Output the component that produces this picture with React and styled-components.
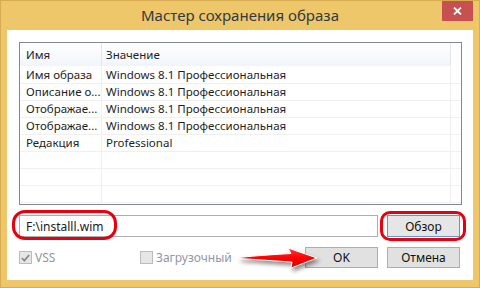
import React from "react";
import styled, { createGlobalStyle } from "styled-components";

const Global = createGlobalStyle`
  html, body { margin: 0; padding: 0; background: #ffffff; }
  body { font-family: "Noto Sans", "Open Sans", sans-serif; }
  * { box-sizing: border-box; }
`;

const Window = styled.div`
  position: relative;
  width: 480px;
  height: 288px;
  border: 1px solid #d8ad52;
  background: #efc76b;
  padding: 0 6px 7px 6px;
  display: flex;
  flex-direction: column;
  font-family: "Noto Sans", sans-serif;
  font-size: 11.5px;
  color: #1a1a1a;
`;

const TitleBar = styled.div`
  height: 29px;
  display: grid;
  grid-template-columns: 1fr auto 1fr;
  align-items: start;
`;

const Title = styled.div`
  grid-column: 2;
  margin-top: 4px;
  font-size: 15px;
  line-height: 20px;
  color: #2e3b45;
  white-space: nowrap;
`;

const CloseButton = styled.div`
  grid-column: 3;
  justify-self: end;
  width: 31px;
  height: 20px;
  background: #c75050;
  display: flex;
  align-items: center;
  justify-content: center;
`;

const Client = styled.div`
  flex: 1;
  background: #ffffff;
  padding: 12px 11px 0 12px;
  display: flex;
  flex-direction: column;
`;

const ListView = styled.div`
  height: 163px;
  border: 1px solid #828790;
  display: flex;
  flex-direction: column;
  overflow: hidden;
`;

const Grid = styled.div`
  display: grid;
  grid-template-columns: 82px 349px 1fr;
  height: ${(p) => p.$h}px;
  border-bottom: 1px solid ${(p) => p.$line};
  background: ${(p) => p.$bg || "transparent"};
`;

const Cell = styled.div`
  border-right: 1px solid ${(p) => p.$line};
  padding-left: ${(p) => p.$pad}px;
  display: flex;
  align-items: center;
  white-space: nowrap;
  overflow: hidden;
  line-height: 16px;
  color: #1e1e1e;
`;

const Blank = styled.div``;

const FieldRow = styled.div`
  margin-top: 10px;
  display: flex;
  align-items: center;
  gap: 9px;
  padding-right: 2px;
`;

const TextField = styled.div`
  width: 359px;
  height: 22px;
  border: 1px solid #abadb3;
  padding-left: 6px;
  display: flex;
  align-items: center;
  color: #1a1a1a;
  font-size: 12px;
`;

const Button = styled.div`
  width: 73px;
  height: ${(p) => p.$h || 21}px;
  border: 1px solid ${(p) => (p.$focus ? "#5b9bd5" : "#adadad")};
  background: ${(p) => (p.$focus ? "#e6e6e6" : "#e1e1e1")};
  display: flex;
  align-items: center;
  justify-content: center;
  color: #111;
  font-size: 12px;
`;

const BottomRow = styled.div`
  margin-top: 10px;
  display: flex;
  align-items: center;
  padding-right: 2px;
`;

const CheckGroup = styled.div`
  display: flex;
  align-items: center;
  gap: 3px;
  width: ${(p) => (p.$w ? p.$w + "px" : "auto")};
  flex: ${(p) => (p.$w ? "none" : "1")};
  color: #8f97a3;
  font-size: 12px;
`;

const Box = styled.div`
  width: 13px;
  height: 13px;
  border: 1px solid #bcbcbc;
  background: #e6e6e6;
  display: flex;
  align-items: center;
  justify-content: center;
`;

const ButtonGap = styled.div`
  width: 9px;
`;

const Highlight = styled.div`
  position: absolute;
  left: ${(p) => p.$x}px;
  top: ${(p) => p.$y}px;
  width: ${(p) => p.$w}px;
  height: ${(p) => p.$h}px;
  border: 3px solid #e8000e;
  border-radius: ${(p) => p.$r}px;
  pointer-events: none;
`;

const Arrow = styled.svg`
  position: absolute;
  left: 234px;
  top: 243px;
  filter: drop-shadow(2px 3px 2px rgba(0, 0, 0, 0.45));
`;

const rows = [
  ["Имя образа", "Windows 8.1 Профессиональная"],
  ["Описание о...", "Windows 8.1 Профессиональная"],
  ["Отображае...", "Windows 8.1 Профессиональная"],
  ["Отображае...", "Windows 8.1 Профессиональная"],
  ["Редакция", "Professional"],
  ["", ""],
  ["", ""],
  ["", ""],
];

export default function App() {
  return (
    <>
      <Global />
      <Window>
        <TitleBar>
          <Title>Мастер сохранения образа</Title>
          <CloseButton>
            <svg width="9" height="8" viewBox="0 0 9 8">
              <path d="M1 0.5 L8 7.5 M8 0.5 L1 7.5" stroke="#fff" strokeWidth="1.8" />
            </svg>
          </CloseButton>
        </TitleBar>
        <Client>
          <ListView>
            <Grid $h={24} $line="#ffffff" $bg="linear-gradient(#ffffff, #f1f5fb)">
              <Cell $line="#e2e7ee" $pad={6}>Имя</Cell>
              <Cell $line="#e2e7ee" $pad={4}>Значение</Cell>
              <Blank style={{ background: "#fff" }} />
            </Grid>
            {rows.map((r, i) => (
              <Grid key={i} $h={17} $line="#f0f0f0">
                <Cell $line="#f0f0f0" $pad={6}>{r[0]}</Cell>
                <Cell $line="#f0f0f0" $pad={4}>{r[1]}</Cell>
                <Blank />
              </Grid>
            ))}
          </ListView>
          <FieldRow>
            <TextField>F:\installl.wim</TextField>
            <Button $focus $h={22}>Обзор</Button>
          </FieldRow>
          <BottomRow>
            <CheckGroup $w={121}>
              <Box>
                <svg width="9" height="8" viewBox="0 0 9 8">
                  <path d="M0.8 4 L3.3 6.6 L8.2 1" fill="none" stroke="#8a8a8a" strokeWidth="1.8" />
                </svg>
              </Box>
              VSS
            </CheckGroup>
            <CheckGroup>
              <Box />
              Загрузочный
            </CheckGroup>
            <Button>OK</Button>
            <ButtonGap />
            <Button>Отмена</Button>
          </BottomRow>
        </Client>
        <Highlight $x={11} $y={209} $w={105} $h={30} $r={13} />
        <Highlight $x={379} $y={210} $w={86} $h={30} $r={10} />
        <Arrow width="90" height="32" viewBox="0 0 90 32">
          <defs>
            <linearGradient id="ag" x1="0" y1="0" x2="0" y2="1">
              <stop offset="0" stopColor="#ff3a3a" />
              <stop offset="0.5" stopColor="#ff0000" />
              <stop offset="1" stopColor="#d80000" />
            </linearGradient>
          </defs>
          <path
            d="M4 13.5 C 22 11.5 40 10.5 56 9.5 L 53 4 L 82 14 L 56 24 L 57 18 C 40 17 22 15.5 4 14.5 Z"
            fill="url(#ag)"
            stroke="#ffffff"
            strokeWidth="1"
            strokeLinejoin="round"
          />
        </Arrow>
      </Window>
    </>
  );
}
